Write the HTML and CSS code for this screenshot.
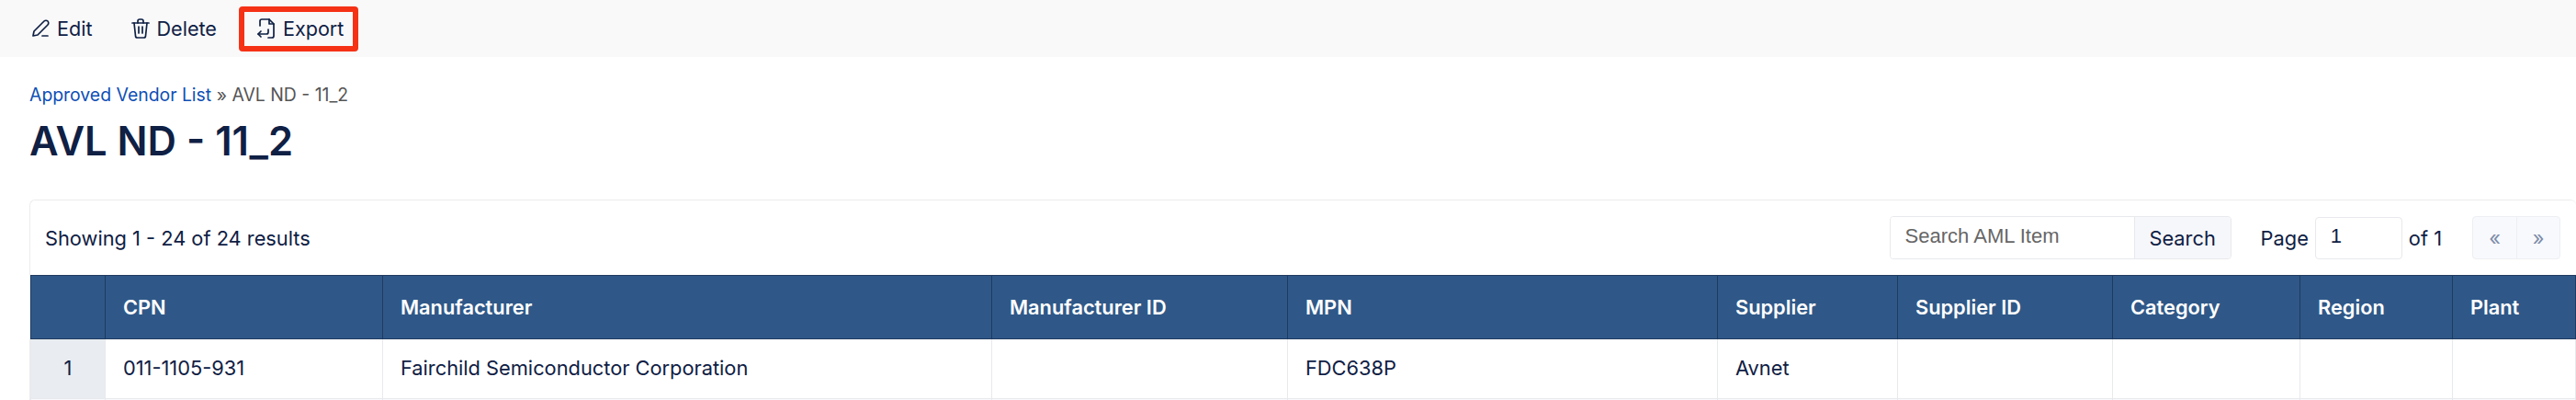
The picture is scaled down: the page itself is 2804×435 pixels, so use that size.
FILE: index.html
```html
<!DOCTYPE html>
<html lang="en">
<head>
    <meta charset="UTF-8">
    <title>AVL ND - 11_2</title>
    <link rel="stylesheet" href="styles.css">
</head>
<body>
    <div class="toolbar">
        <a class="tool tool-edit">
            <svg class="icon" viewBox="0 0 24 24"><path d="M4 20l1-5L16 4c1-1 3-1 4 0s1 3 0 4L9 19z"/><path d="M14 20h6"/></svg>
            Edit
        </a>
        <a class="tool tool-delete">
            <svg class="icon" viewBox="0 0 24 24"><path d="M3 6h18"/><path d="M9 6V4c0-1 1-2 2-2h2c1 0 2 1 2 2v2"/><path d="M5 6l1.500 14c0 1 1 2 2 2h7c1 0 2-1 2-2L19 6"/><path d="M10 10v7M14 10v7"/></svg>
            Delete
        </a>
        <a class="tool tool-export">
            <svg class="icon" viewBox="0 0 24 24"><path d="M5 9V4c0-1 1-2 2-2h8l5 5v13c0 1-1 2-2 2h-4"/><path d="M15 2v5h5"/><path d="M14 13v3c0 1-1 2-2 2H3"/><path d="M6 15l-3 3 3 3"/></svg>
            Export
        </a>
    </div>

    <div class="content">
        <div class="breadcrumb"><a href="#">Approved Vendor List</a> <span class="sep">»</span> AVL ND - 11_2</div>
        <h1>AVL ND - 11_2</h1>

        <div class="card">
            <div class="card-header">
                <div class="results">Showing 1 - 24 of 24 results</div>
                <div class="search">
                    <input class="search-input" type="text" placeholder="Search AML Item">
                    <button class="search-btn">Search</button>
                </div>
                <div class="paging">
                    <span>Page</span>
                    <input class="page-input" type="text" value="1">
                    <span>of 1</span>
                </div>
                <div class="pager">
                    <button class="pager-btn">«</button>
                    <button class="pager-btn">»</button>
                </div>
            </div>
            <table class="items">
                <colgroup>
                    <col class="col-num">
                    <col class="col-cpn">
                    <col class="col-mfr">
                    <col class="col-mfr-id">
                    <col class="col-mpn">
                    <col class="col-sup">
                    <col class="col-sup-id">
                    <col class="col-cat">
                    <col class="col-reg">
                    <col class="col-plant">
                </colgroup>
                <thead>
                    <tr>
                        <th></th>
                        <th>CPN</th>
                        <th>Manufacturer</th>
                        <th>Manufacturer ID</th>
                        <th>MPN</th>
                        <th>Supplier</th>
                        <th>Supplier ID</th>
                        <th>Category</th>
                        <th>Region</th>
                        <th>Plant</th>
                    </tr>
                </thead>
                <tbody>
                    <tr>
                        <td class="num">1</td>
                        <td>011-1105-931</td>
                        <td>Fairchild Semiconductor Corporation</td>
                        <td></td>
                        <td>FDC638P</td>
                        <td>Avnet</td>
                        <td></td>
                        <td></td>
                        <td></td>
                        <td></td>
                    </tr>
                    <tr class="alt">
                        <td></td>
                        <td></td>
                        <td></td>
                        <td></td>
                        <td></td>
                        <td></td>
                        <td></td>
                        <td></td>
                        <td></td>
                        <td></td>
                    </tr>
                </tbody>
            </table>
        </div>
    </div>
</body>
</html>
```

FILE: styles.css
```css
html, body {
    overflow: hidden;
}

body {
    font-family: Inter, "Liberation Sans", sans-serif;
    font-size: 21.6px;
    color: #0f2044;
    background: white;
    margin: 0;
}

.toolbar {
    display: flex;
    align-items: center;
    height: 62px;
    padding: 0 16px;
    background: #f9f9fa;
    box-sizing: border-box;
}

.tool {
    display: flex;
    align-items: center;
    gap: 6px;
    padding: 0 16px;
    height: 49px;
    box-sizing: border-box;
}

.tool-delete {
    margin-left: 8px;
}

.tool-export {
    margin-left: 8px;
    padding: 0 10px 0 12px;
    border: 6px solid #f53216;
    border-radius: 4px;
}

.icon {
    width: 24px;
    height: 24px;
    fill: none;
    stroke: #0f2044;
    stroke-width: 1.7;
    stroke-linecap: round;
    stroke-linejoin: round;
}

.content {
    padding: 27px 0 0 32px;
}

.breadcrumb {
    font-size: 19.4px;
    line-height: 28px;
    color: #555;
}

.breadcrumb a {
    color: #0f4fb5;
    text-decoration: none;
}

h1 {
    margin: 10px 0 0;
    font-size: 43.5px;
    line-height: 52px;
    font-weight: 600;
    color: #0f2044;
}

.card {
    margin-top: 38px;
    background: white;
    border: 1px solid #ececee;
    border-right: none;
    border-radius: 6px 6px 0 0;
    font-size: 21.8px;
}

.card-header {
    display: flex;
    align-items: center;
    height: 81px;
    padding: 0 17px 0 16px;
    box-sizing: border-box;
}

.results {
    flex-grow: 1;
}

.search {
    display: flex;
    height: 47px;
    border: 1px solid #e8e9ec;
    border-radius: 4px;
    box-sizing: border-box;
    width: 372px;
    overflow: hidden;
}

.search-input {
    flex-grow: 1;
    width: 0;
    border: none;
    padding: 0 16px 3px;
    font-family: "Liberation Sans", sans-serif;
    font-size: 22px;
}

.search-input::placeholder {
    color: #666;
}

.search-btn {
    flex: none;
    width: 105px;
    border: none;
    border-left: 1px solid #e8e9ec;
    background: #f6f7fb;
    color: inherit;
    font: inherit;
}

.paging {
    display: flex;
    align-items: center;
    margin-left: 32px;
    gap: 7px;
}

.page-input {
    width: 95px;
    height: 46px;
    border: 1px solid #e8e9ec;
    border-radius: 4px;
    padding: 0 16px 3px;
    box-sizing: border-box;
    font-family: "Liberation Sans", sans-serif;
    font-size: 22px;
    color: inherit;
}

.pager {
    display: flex;
    margin-left: 33px;
    height: 47px;
    border: 1px solid #eeeff3;
    border-radius: 4px;
    background: #f8f9fc;
    box-sizing: border-box;
}

.pager-btn {
    width: 47px;
    border: none;
    background: none;
    font: inherit;
    color: #7d8ca8;
}

.pager-btn + .pager-btn {
    border-left: 1px solid #eeeff3;
}

.items {
    width: 100%;
    table-layout: fixed;
    border-collapse: collapse;
}

.col-num { width: 81px; }
.col-cpn { width: 302px; }
.col-mfr { width: 663px; }
.col-mfr-id { width: 322px; }
.col-mpn { width: 468px; }
.col-sup { width: 196px; }
.col-sup-id { width: 234px; }
.col-cat { width: 204px; }
.col-reg { width: 166px; }

.items th {
    height: 68px;
    padding: 0 19px;
    text-align: left;
    font-weight: 600;
    color: white;
    background: #2f5888;
    border: 1px solid #1f3a5f;
}

.items td {
    height: 65px;
    padding: 0 19px 2px;
    box-sizing: border-box;
    border: 1px solid #e8e9ec;
    border-top: none;
}

.items .num {
    text-align: center;
    background: #e9ecf1;
    padding: 0 0 2px;
}

.alt td {
    background: #f8f9fc;
}
```
